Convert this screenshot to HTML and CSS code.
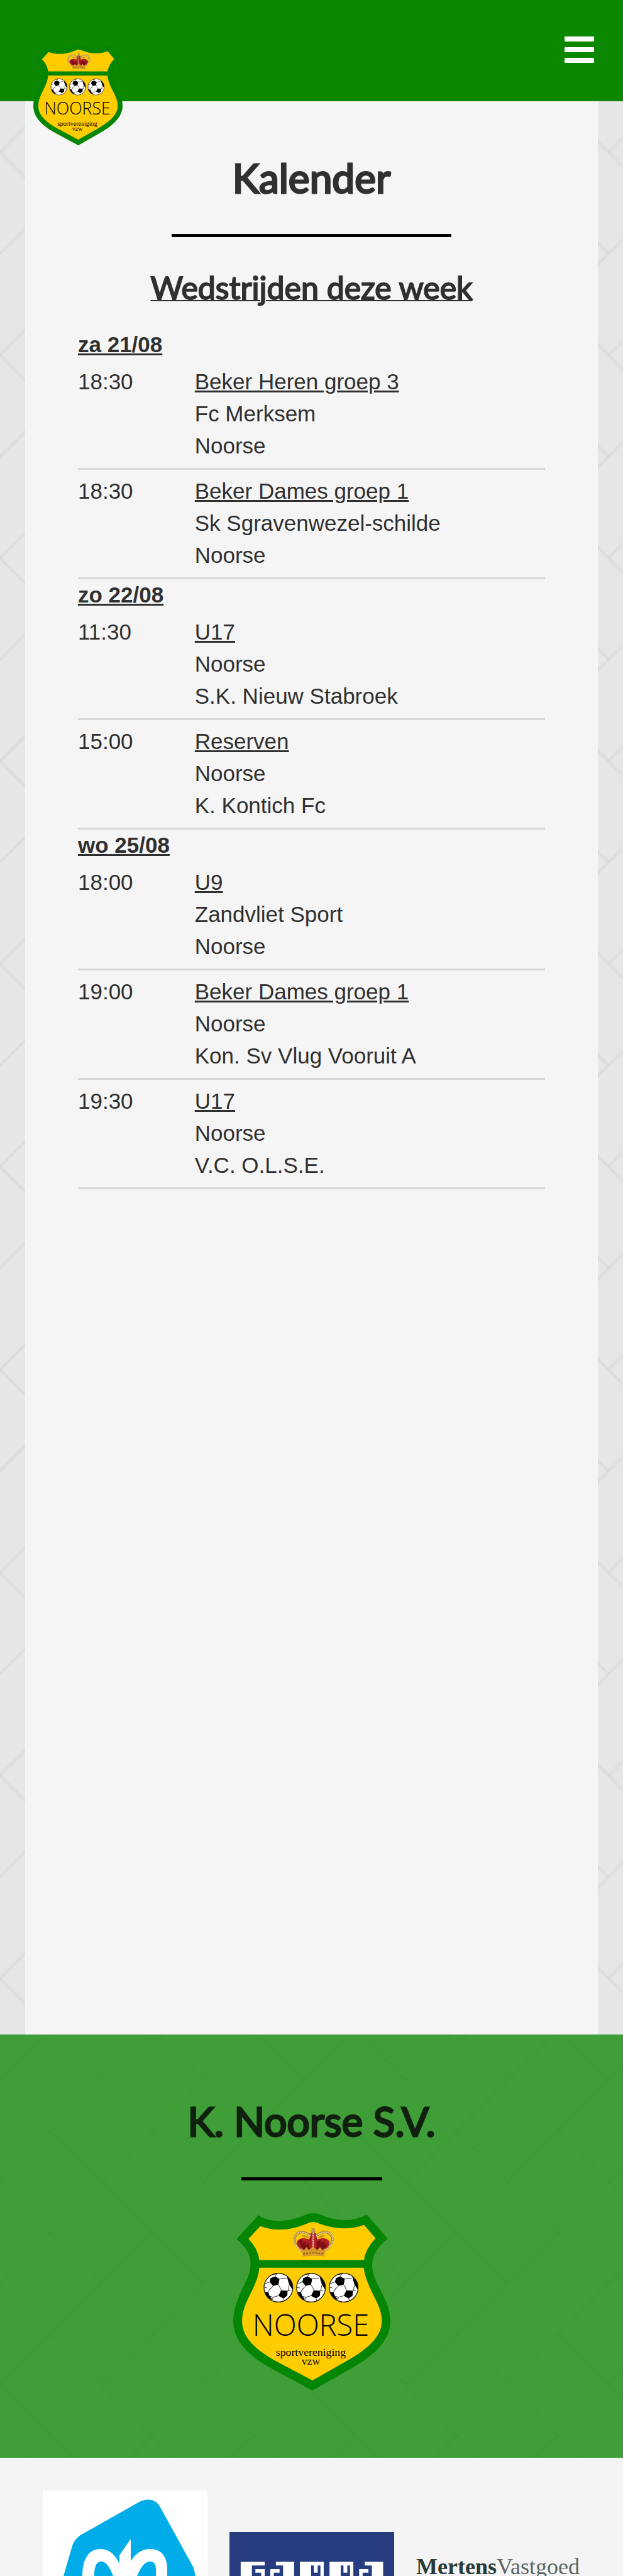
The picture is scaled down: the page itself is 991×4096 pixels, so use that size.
FILE: index.html
```html
<!DOCTYPE html>
<html lang="nl">
<head>
<meta charset="utf-8">
<meta name="viewport" content="width=device-width, initial-scale=1">
<title>Kalender - K. Noorse S.V.</title>
<link rel="stylesheet" href="styles.css">
</head>
<body>
<svg class="defs" aria-hidden="true">
  <defs>
    <symbol id="ball" viewBox="0 0 156 156">
      <clipPath id="ball-clip"><circle cx="78" cy="78" r="75"/></clipPath>
      <circle cx="78" cy="78" r="75" fill="#fff"/>
      <g clip-path="url(#ball-clip)">
        <path d="M38 28 60 20 84 32 78 62 50 69 32 48ZM122 18 150 50 152 90 135 62 128 42ZM92 92 126 94 124 120 104 134 78 120ZM0 98 26 102 32 122 48 140 20 140ZM50 2 76 2 70 8 48 10ZM110 148 134 136 150 110 152 156Z" fill="#000"/>
        <path d="M60 20 70 4M84 32 120 28M78 62 94 92M50 69 28 94M32 48 8 58M135 62 128 94M26 102 28 94 38 80M78 120 50 128 32 122M104 134 108 148M50 128 48 140M126 94 140 92M4 76 20 80" fill="none" stroke="#222" stroke-width="3"/>
      </g>
      <circle cx="78" cy="78" r="75" fill="none" stroke="#111" stroke-width="4"/>
    </symbol>
    <symbol id="crest" viewBox="72 87 818 923">
      <path fill="#048504" d="M203 98C260 138 350 138 450 95Q488 79 528 95C610 131 690 135 767 94L876 220C780 295 780 370 822 455C860 530 890 580 890 650C890 750 800 830 700 887L484 1010 280 900C150 832 72 750 72 650C72 575 110 500 140 440C175 365 175 290 89 222Z"/>
      <path fill="#fc0" d="M213 155C280 180 360 182 455 142Q488 124 520 142C600 172 680 175 753 148L813 218Q762 270 752 332H208Q200 270 151 221Z"/>
      <path fill="#fc0" d="M208 371H751Q758 430 800 510C828 565 845 600 845 650C845 730 770 795 670 852L484 958 300 860C190 800 118 735 118 650C118 600 135 560 160 510Q203 430 208 371Z"/>
      <path fill="none" stroke="#a8842f" stroke-width="13" d="M430 284Q376 240 394 208 420 164 476 206M546 284Q602 240 584 208 558 164 502 206"/>
      <path fill="#b01f24" d="M403 236Q420 208 468 224L474 192 488 184 502 192 508 224Q556 208 573 236 574 262 548 282H430Q402 262 403 236Z"/>
      <path fill="#c99a25" d="M426 204Q450 196 468 216L440 214ZM552 204Q528 196 510 216L538 214Z"/>
      <path fill="#7c0f15" d="M412 232 436 224 430 244 450 236 446 258 466 240 470 274 434 276ZM506 236 528 226 526 244 548 232 546 254 566 240 546 278 506 274Z"/>
      <path fill="none" stroke="#ead9bd" stroke-width="7" stroke-dasharray="6 3" d="M428 284Q374 240 392 208 418 166 474 206M548 284Q604 240 586 208 560 166 504 206M488 190V275"/>
      <path fill="#b59a5c" d="M478 165H498L494 174 502 178 496 190H480L474 178 483 174Z"/>
      <path fill="#d59a2b" d="M424 268 440 280 454 264 466 280 488 260 508 280 524 264 536 280 554 268 546 314Q488 302 434 314Z"/>
      <path fill="none" stroke="#8c4a12" stroke-width="5" stroke-dasharray="9 7" d="M436 300Q488 288 544 300"/>
      <use href="#ball" x="229" y="397" width="156" height="156"/>
      <use href="#ball" x="399" y="397" width="156" height="156"/>
      <use href="#ball" x="569" y="397" width="156" height="156"/>
      <text class="crest-name" x="476" y="725" text-anchor="middle">NOORSE</text>
      <text class="crest-sub" x="476" y="830" text-anchor="middle">sportvereniging</text>
      <text class="crest-sub" x="476" y="876" text-anchor="middle">vzw</text>
    </symbol>
  </defs>
</svg>

<div class="page">
  <header class="header">
    <a class="brand" href="#" aria-label="K. Noorse S.V."><svg class="brand-crest" viewBox="0 0 818 923" role="img" aria-hidden="true"><use href="#crest" width="818" height="923"/></svg></a>
    <button class="menu" type="button" aria-label="Menu">
      <svg viewBox="0 0 47 42" aria-hidden="true"><path fill="#fff" d="M1 0H46L47 1V7L46 8H1L0 7V1ZM1 17H46L47 18V24L46 25H1L0 24V18ZM1 34H46L47 35V41L46 42H1L0 41V35Z"/></svg>
    </button>
  </header>

  <main class="card">
    <h1 class="title">Kalender</h1>
    <hr class="rule">
    <h2 class="subtitle">Wedstrijden deze week</h2>
    <table class="matches">
      <colgroup><col class="col-time"><col></colgroup>
      <tbody>
        <tr><th class="day" colspan="2">za 21/08</th></tr>
        <tr class="match"><td>18:30</td><td><a href="#">Beker Heren groep 3</a><div>Fc Merksem</div><div>Noorse</div></td></tr>
        <tr class="match"><td>18:30</td><td><a href="#">Beker Dames groep 1</a><div>Sk Sgravenwezel-schilde</div><div>Noorse</div></td></tr>
        <tr><th class="day" colspan="2">zo 22/08</th></tr>
        <tr class="match"><td>11:30</td><td><a href="#">U17</a><div>Noorse</div><div>S.K. Nieuw Stabroek</div></td></tr>
        <tr class="match"><td>15:00</td><td><a href="#">Reserven</a><div>Noorse</div><div>K. Kontich Fc</div></td></tr>
        <tr><th class="day" colspan="2">wo 25/08</th></tr>
        <tr class="match"><td>18:00</td><td><a href="#">U9</a><div>Zandvliet Sport</div><div>Noorse</div></td></tr>
        <tr class="match"><td>19:00</td><td><a href="#">Beker Dames groep 1</a><div>Noorse</div><div>Kon. Sv Vlug Vooruit A</div></td></tr>
        <tr class="match"><td>19:30</td><td><a href="#">U17</a><div>Noorse</div><div>V.C. O.L.S.E.</div></td></tr>
      </tbody>
    </table>
  </main>

  <section class="club">
    <h2 class="title">K. Noorse S.V.</h2>
    <hr class="rule rule-short">
    <svg class="club-crest" viewBox="0 0 818 923" role="img" aria-label="K. Noorse sportvereniging vzw"><use href="#crest" width="818" height="923"/></svg>
  </section>

  <footer class="sponsors">
    <a class="sponsor" href="#" aria-label="Albert Heijn">
      <svg viewBox="0 0 262 136" aria-hidden="true">
        <path fill="#fff" d="M0 0H262V136H0Z"/>
        <path fill="#00ade8" d="M33 136 47 88Q50 78 60 71L154 18Q163 13 173 15 181 17 186 25L240 123 243 136Z"/>
        <path fill="#fff" d="M63 136C63 108 74 93 92 93C106 93 116 103 122 117V103L140 77V113C147 100 158 93 172 93C190 93 198 108 198 124V136H180V126C180 118 178 113 171 113C162 113 156 122 150 136H112C106 120 100 113 93 113C84 113 82 124 82 136Z"/>
      </svg>
    </a>
    <a class="sponsor" href="#" aria-label="Gamma">
      <svg viewBox="25 34 851 229" aria-hidden="true">
        <path fill="#283d80" d="M25 34H876V263H25Z"/>
        <path fill="#fff" d="M83 188H207V207H141V263H83ZM159 226H207V263H189V244H159ZM265 188H359V263H302V207H265ZM236 226H284V244H254V263H236ZM389 188H512V263H495V207H481V244H461V207H447V263H389ZM542 188H665V263H648V207H634V244H614V207H600V263H542ZM724 188H819V263H761V207H724ZM695 226H743V244H713V263H695Z"/>
      </svg>
    </a>
    <a class="sponsor sponsor-text" href="#"><b>Mertens</b><span>Vastgoed</span></a>
  </footer>
</div>
</body>
</html>
```
FILE: styles.css
```css
* {
  box-sizing: border-box;
}

body {
  margin: 0;
  color: #303030;
  font-family: "Liberation Sans", Arial, sans-serif;
  font-size: 35px;
  line-height: 51px;
}

.defs {
  position: absolute;
  width: 0;
  height: 0;
}

/* Herringbone tile: 3 x 3 repeats, so that the tile is a whole number of pixels */
.page {
  background-color: #e4e6e8;
  background-image: url("data:image/svg+xml,%3Csvg xmlns='http://www.w3.org/2000/svg' width='484' height='968' viewBox='0 0 528 1056'%3E%3Cdefs%3E%3Cg id='b' fill='none' stroke='%23000' stroke-opacity='.035' stroke-width='5'%3E%3Cpath d='M0 0L264-264'/%3E%3Cpath d='M-88-88L176 176'/%3E%3C/g%3E%3Cpattern id='p' width='176' height='352' patternUnits='userSpaceOnUse'%3E%3Cuse href='%23b'/%3E%3Cuse href='%23b' x='-176'/%3E%3Cuse href='%23b' x='176'/%3E%3Cuse href='%23b' y='352'/%3E%3Cuse href='%23b' x='-176' y='352'/%3E%3Cuse href='%23b' x='176' y='352'/%3E%3C/pattern%3E%3C/defs%3E%3Crect width='528' height='1056' fill='url(%23p)'/%3E%3C/svg%3E");
  background-position: 0 242px;
}

.header {
  display: flex;
  justify-content: space-between;
  align-items: flex-start;
  height: 161px;
  padding: 58px 46px 0 53px;
  background: #0b8800;
}

.brand {
  display: block;
  padding-top: 12px;
}

.brand-crest {
  display: block;
  position: relative;
  width: 142px;
  height: 162px;
}

.menu {
  padding: 0;
  border: 0;
  background: none;
}

.menu svg {
  display: block;
  width: 47px;
  height: 42px;
}

.card {
  min-height: 3074px;
  margin: 0 40px;
  padding: 82px 84px 0;
  background: #f5f5f5;
}

.title,
.subtitle {
  margin: 0;
  font-family: Lato, sans-serif;
  font-weight: 400;
  text-align: center;
}

.title {
  font-size: 64px;
  line-height: 80px;
  -webkit-text-stroke: 3px currentColor;
}

.subtitle {
  font-size: 50px;
  line-height: 64px;
  text-decoration: underline;
  text-decoration-thickness: 2px;
  -webkit-text-stroke: 2px currentColor;
}

.rule {
  width: 60%;
  height: 5px;
  margin: 49px auto 48px;
  border: 0;
  background: #000;
}

.matches {
  width: 100%;
  margin-top: 34px;
  border-collapse: collapse;
  table-layout: fixed;
}

.col-time {
  width: 25%;
}

.matches th,
.matches td {
  padding: 0;
  text-align: left;
  vertical-align: top;
}

.day {
  line-height: 50px;
  text-decoration: underline;
}

.matches .match td {
  padding: 8px 0 10px;
  border-bottom: 3px solid #d8d8d8;
}

.match a {
  display: block;
  color: inherit;
}

.club {
  padding: 98px 0 107px;
  background: rgba(11, 136, 0, 0.76);
}

.club .title {
  color: #10210f;
}

.rule-short {
  width: 224px;
  margin-bottom: 52px;
}

.club-crest {
  display: block;
  width: 250px;
  height: 282px;
  margin: 0 auto;
}

.crest-name {
  font-family: "Open Sans", sans-serif;
  font-size: 154px;
  font-weight: 300;
}

.crest-sub {
  font-family: "Liberation Serif", serif;
  font-size: 58px;
}

.sponsors {
  display: flex;
  align-items: flex-end;
  gap: 35px;
  padding: 52px 67px 0 68px;
  background: #f4f4f4;
}

.sponsor {
  flex: 1;
  color: #263b35;
  text-decoration: none;
}

.sponsor svg {
  display: block;
  width: 100%;
}

.sponsor-text {
  font-family: "Liberation Serif", serif;
  font-size: 36px;
  line-height: 30px;
}

.sponsor-text span {
  color: #5b6662;
}
```
